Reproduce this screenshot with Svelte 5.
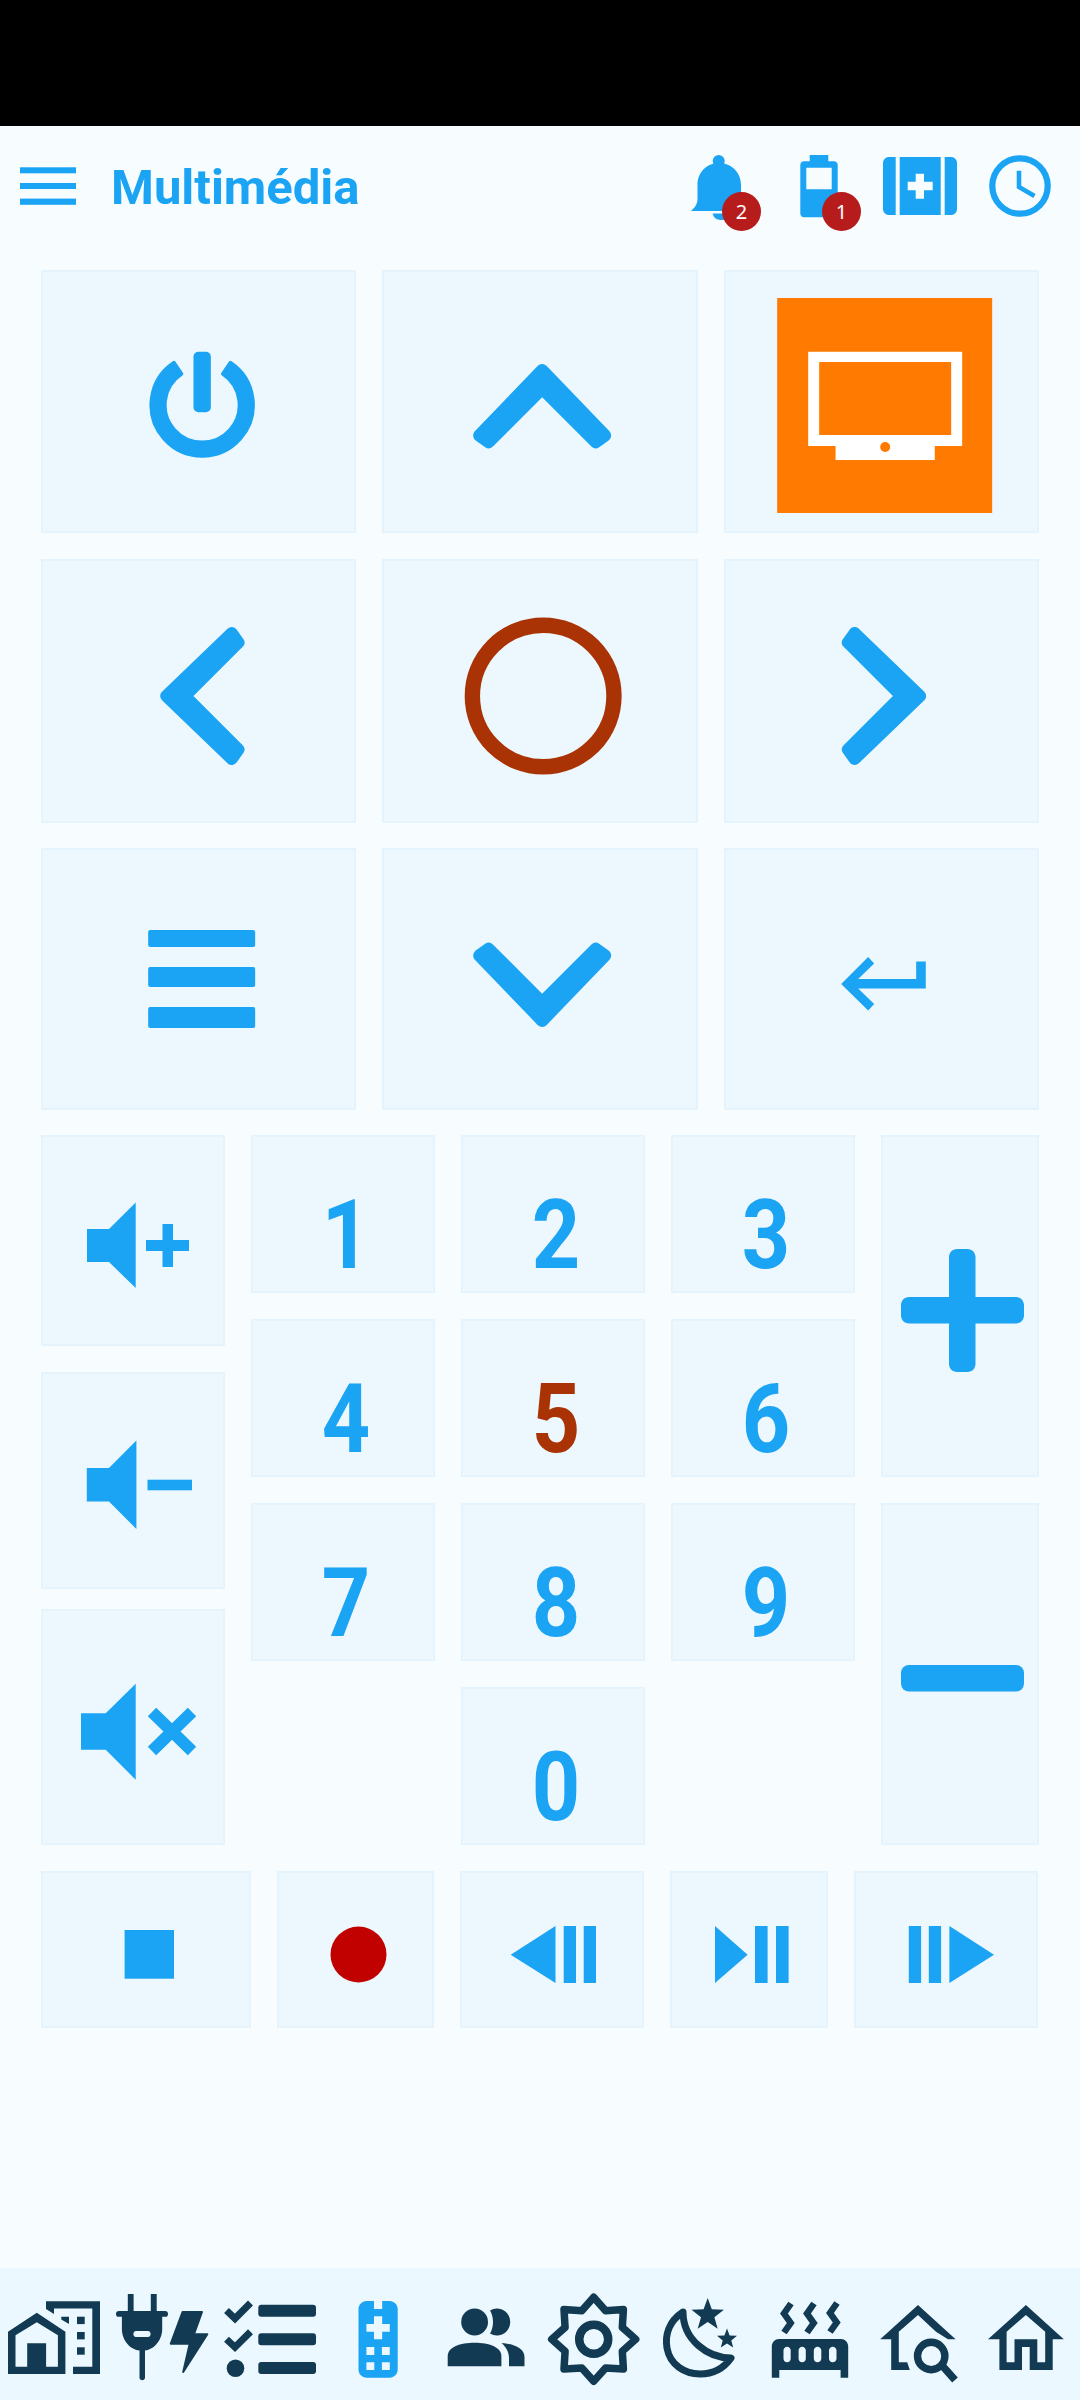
<script>
  const digits = ["1", "2", "3", "4", "5", "6", "7", "8", "9", "0"];

  // up-pointing chevron, apex on 0,0 - rotated for the other three directions
  const chevron = "M0 6L63 71.5L53.5 78.3L0 24.8L-53.5 78.3L-63 71.5Z";

  const starPoints = (cx, cy, outer, inner, tips) => {
    const pts = [];
    for (let i = 0; i < tips * 2; i++) {
      const r = i % 2 ? inner : outer;
      const a = (Math.PI * i) / tips - Math.PI / 2;
      pts.push((cx + r * Math.cos(a)).toFixed(1) + "," + (cy + r * Math.sin(a)).toFixed(1));
    }
    return pts.join(" ");
  };
</script>

<div class="screen">
  <div class="status"></div>

  <header>
    <svg class="burger" viewBox="20 165 56 42" width="56" height="42">
      <rect x="20" y="167.3" width="56" height="6" />
      <rect x="20" y="183" width="56" height="6" />
      <rect x="20" y="198.6" width="56" height="6.2" />
    </svg>
    <h1>Multimédia</h1>
    <div class="actions">
      <div class="action bell">
        <svg viewBox="690 155 60 66" width="60" height="66">
          <circle cx="718.7" cy="161" r="6" />
          <path d="M691 211Q697 206 697.5 200V185C697.5 171 708 163 719 163C730 163 741 171 741 185V200Q741 206 747 211Z" />
          <path d="M712.7 213.5H731C730 218 725 220 721.5 220C717 220 713.5 218 712.7 213.5Z" />
        </svg>
        <span class="badge">2</span>
      </div>
      <div class="action battery">
        <svg viewBox="800 155 40 66" width="40" height="66">
          <path fill-rule="evenodd" d="M809.7 155H828.3V161.3H834C836 161.3 837.7 163 837.7 165V213.5C837.7 215.5 836 217.3 834 217.3H804C802 217.3 800.3 215.5 800.3 213.5V165C800.3 163 802 161.3 804 161.3H809.7ZM806.3 167.7V189.3H831.7V167.7Z" />
        </svg>
        <span class="badge">1</span>
      </div>
      <div class="action">
        <svg viewBox="883 155 74 66" width="74" height="66">
          <path d="M895.7 157V215H889C885.7 215 883 212.3 883 209V163C883 159.7 885.7 157 889 157Z" />
          <path d="M944.7 157H951C954.3 157 957 159.7 957 163V209C957 212.3 954.3 215 951 215H944.7Z" />
          <path fill-rule="evenodd" d="M899.7 157H940.7V215H899.7ZM915.7 173.7V181.7H907.7V190.3H915.7V198.7H924V190.3H932.7V181.7H924V173.7Z" />
        </svg>
      </div>
      <div class="action">
        <svg viewBox="989 155 62 66" width="62" height="66">
          <circle class="line" cx="1020" cy="186" r="27.7" stroke-width="6.2" />
          <path class="line" d="M1019 170.7V187L1034.5 196" stroke-width="4.6" />
        </svg>
      </div>
    </div>
  </header>

  <main>
    <section class="dpad">
      <button class="key">
        <svg viewBox="41 270 315 263">
          <rect x="193.3" y="351.7" width="17.4" height="60.6" rx="5" />
          <path class="soft" stroke-width="4" d="M173.7 362.9A50.7 50.7 0 1 0 230.3 362.9L222.9 373.9A37.5 37.5 0 1 1 181.1 373.9Z" />
        </svg>
      </button>
      <button class="key">
        <svg viewBox="382 270 315 263">
          <path class="soft" stroke-width="12" d={chevron} transform="translate(542 364)" />
        </svg>
      </button>
      <button class="key">
        <svg viewBox="724 270 315 263">
          <rect class="orange" x="777" y="298" width="215" height="215" />
          <path class="white" fill-rule="evenodd" d="M808 351.7H962V446H934.6V460H835.4V446H808ZM819 362V435H951V362Z" />
          <circle class="orange" cx="885" cy="447" r="5" />
        </svg>
      </button>

      <button class="key">
        <svg viewBox="41 558 315 264">
          <path class="soft" stroke-width="12" d={chevron} transform="translate(160 695) rotate(-90)" />
        </svg>
      </button>
      <button class="key">
        <svg viewBox="382 558 315 264">
          <circle class="line brown" cx="543" cy="695" r="70.8" stroke-width="15.4" />
        </svg>
      </button>
      <button class="key">
        <svg viewBox="724 558 315 264">
          <path class="soft" stroke-width="12" d={chevron} transform="translate(926 695) rotate(90)" />
        </svg>
      </button>

      <button class="key">
        <svg viewBox="41 848 315 262">
          <rect x="148" y="930" width="107" height="17" rx="2" />
          <rect x="148" y="967" width="107" height="20" rx="2" />
          <rect x="148" y="1007" width="107" height="21" rx="2" />
        </svg>
      </button>
      <button class="key">
        <svg viewBox="382 848 315 262">
          <path class="soft" stroke-width="12" d={chevron} transform="translate(542 1027) rotate(180)" />
        </svg>
      </button>
      <button class="key">
        <svg viewBox="724 848 315 262">
          <path d="M841 984L868 957L874 963.5L858 979H916V961.5H925.6V988.6H858L874 1004L868 1010.5Z" />
        </svg>
      </button>
    </section>

    <section class="numpad">
      <div class="volume">
        <button class="key">
          <svg viewBox="41 1135 184 211">
            <path d="M87 1229H109L135.7 1202.4V1288L109 1262H87Z" />
            <path d="M162.5 1224H173V1240H189V1251H173V1267H162.5V1251H146V1240H162.5Z" />
          </svg>
        </button>
        <button class="key down">
          <svg viewBox="41 1372 184 217">
            <path d="M86.8 1468H109L136.4 1440.4V1529L109 1501.5H86.8Z" />
            <rect x="147.5" y="1479.7" width="44.5" height="10.6" />
          </svg>
        </button>
        <button class="key">
          <svg viewBox="41 1609 184 236">
            <path d="M81 1713.3H105.7L135.7 1683.7V1779.7L105.7 1749.7H81Z" />
            <path class="line" d="M152 1712L192 1751M192 1712L152 1751" stroke-width="12" />
          </svg>
        </button>
      </div>

      {#each digits as d}
        <button class="key digit" class:zero={d === "0"} class:hot={d === "5"}><span>{d}</span></button>
      {/each}

      <button class="key plus">
        <svg viewBox="881 1135 158 342">
          <path d="M949 1257C949 1252.6 952.6 1249 957 1249H967.5C971.9 1249 975.5 1252.6 975.5 1257V1297H1016C1020.4 1297 1024 1300.6 1024 1305V1315.6C1024 1320 1020.4 1323.6 1016 1323.6H975.5V1364C975.5 1368.4 971.9 1372 967.5 1372H957C952.6 1372 949 1368.4 949 1364V1323.6H909C904.6 1323.6 901 1320 901 1315.6V1305C901 1300.6 904.6 1297 909 1297H949Z" />
        </svg>
      </button>
      <button class="key minus">
        <svg viewBox="881 1503 158 342">
          <rect x="901" y="1665" width="123" height="26.5" rx="8" />
        </svg>
      </button>
    </section>

    <section class="transport">
      <button class="key">
        <svg viewBox="41 1871 210 157"><rect x="124.6" y="1930" width="49.4" height="48.7" /></svg>
      </button>
      <button class="key">
        <svg viewBox="277 1871 157 157"><circle class="rec" cx="358.5" cy="1954.5" r="28" /></svg>
      </button>
      <button class="key">
        <svg viewBox="461 1871 184 157">
          <path d="M511.7 1954.7L556.5 1926V1983Z" />
          <rect x="564.7" y="1926" width="12.3" height="57" />
          <rect x="584.7" y="1926" width="12.3" height="57" />
        </svg>
      </button>
      <button class="key">
        <svg viewBox="671 1871 158 157">
          <path d="M716 1926L748.6 1954.7L716 1983Z" />
          <rect x="756" y="1926" width="12.6" height="57" />
          <rect x="777" y="1926" width="12.6" height="57" />
        </svg>
      </button>
      <button class="key">
        <svg viewBox="855 1871 184 157">
          <rect x="909.8" y="1926" width="12.3" height="57" />
          <rect x="929.8" y="1926" width="12.3" height="57" />
          <path d="M950.4 1926L995 1954.7L950.4 1983Z" />
        </svg>
      </button>
    </section>
  </main>

  <nav>
    <svg viewBox="0 2268 108 132" width="108" height="132">
      <path fill-rule="evenodd" d="M8 2331.7L36.8 2312.7L65.4 2331.7V2374H8ZM15.5 2335.3V2366.7H27.2V2343.3H46.1V2366.7H57.9V2335.3L36.8 2322.3Z" />
      <path d="M46 2301.3H100V2374H73V2366.7H92.3V2308.5H54V2314L46 2309Z" />
      <path d="M61.3 2316.7H69V2324L61.3 2319.5Z" />
      <rect x="77" y="2316.7" width="7.7" height="7.4" />
      <rect x="77" y="2332" width="7.7" height="7.4" />
      <rect x="77" y="2347.3" width="7.7" height="7.4" />
    </svg>
    <svg viewBox="108 2268 104 132" width="104" height="132">
      <rect x="127.8" y="2294" width="5.8" height="18" />
      <rect x="150.8" y="2294" width="5.9" height="18" />
      <rect x="116" y="2311" width="52" height="5.8" rx="2.9" />
      <path fill-rule="evenodd" d="M121.9 2316H162.2V2329C162.2 2341 153 2350 145 2350.5V2377.5C145 2381 139.5 2381 139.5 2377.5V2350.5C131 2350 121.9 2341 121.9 2329ZM136 2331C132.5 2331 132.5 2337 136 2337H148C151.5 2337 151.5 2331 148 2331Z" />
      <path class="soft" stroke-width="2" d="M182.5 2312H202L193.9 2334.3H207.3L183.2 2372L189.7 2343.7H170.8Z" />
    </svg>
    <svg viewBox="212 2268 123 132" width="123" height="132">
      <path class="line" d="M226.5 2310.5L235 2318.5L250.5 2303" stroke-width="7" />
      <path class="line" d="M226.5 2339.2L235 2347.2L250.5 2331.7" stroke-width="7" />
      <circle cx="235.5" cy="2368.3" r="8.8" />
      <rect x="258.3" y="2304.7" width="57.7" height="12" rx="3" />
      <rect x="258.3" y="2333.3" width="57.7" height="12" rx="3" />
      <rect x="258.3" y="2362" width="57.7" height="12" rx="3" />
    </svg>
    <svg class="current" viewBox="335 2268 85 132" width="85" height="132">
      <path fill-rule="evenodd" d="M366.5 2301H374V2309H382.2V2301H389.7C394 2301 397.7 2304.7 397.7 2309V2369.7C397.7 2374 394 2377.7 389.7 2377.7H366.5C362.2 2377.7 358.5 2374 358.5 2369.7V2309C358.5 2304.7 362.2 2301 366.5 2301ZM374 2316.3V2324H366.4V2331.7H374V2339.3H382.2V2331.7H389.8V2324H382.2V2316.3ZM366.4 2347V2355H374.3V2347ZM381.9 2347V2355H389.8V2347ZM366.4 2362.3V2370H374.3V2362.3ZM381.9 2362.3V2370H389.8V2362.3Z" />
    </svg>
    <svg viewBox="420 2268 115 132" width="115" height="132">
      <circle cx="474.6" cy="2322" r="13.4" />
      <path d="M447.7 2366.3V2356C447.7 2347 460 2342.7 474.6 2342.7C489 2342.7 501.4 2347 501.4 2356V2366.3Z" />
      <path d="M490 2310.5A13.4 13.4 0 1 1 490 2333.5C494 2327 494 2317 490 2310.5Z" />
      <path d="M501.5 2343C515 2344 524.5 2349 524.5 2357V2366.3H509V2358C509 2352 506 2347 501.5 2343Z" />
    </svg>
    <svg viewBox="535 2268 115 132" width="115" height="132">
      <polygon class="line round" points={starPoints(593.7, 2339.3, 42, 31, 8)} stroke-width="7.5" />
      <circle class="line" cx="593.7" cy="2339.3" r="14.5" stroke-width="8.5" />
    </svg>
    <svg viewBox="650 2268 110 132" width="110" height="132">
      <path class="line round" d="M683 2312C668 2322 665 2336 667 2348C670 2365 685 2374 700 2374C714 2374 724 2368 731 2358C708 2358 683 2340 683 2312Z" stroke-width="7" />
      <polygon points={starPoints(707.7, 2315, 17, 7, 5)} />
      <polygon points={starPoints(727, 2339, 10.5, 4.5, 5)} />
    </svg>
    <svg viewBox="760 2268 110 132" width="110" height="132">
      <path fill-rule="evenodd" d="M779 2339H841C845 2339 848.2 2342.5 848.2 2346.5V2377.7H840.6V2370H779.3V2377.7H771.8V2346.5C771.8 2342.5 775 2339 779 2339ZM787.1 2346.7C785 2346.7 783.5 2348.5 783.5 2350.3V2358.7C783.5 2360.5 785 2362.3 787.1 2362.3C789.2 2362.3 790.7 2360.5 790.7 2358.7V2350.3C790.7 2348.5 789.2 2346.7 787.1 2346.7ZM802.2 2346.7C800.1 2346.7 798.6 2348.5 798.6 2350.3V2358.7C798.6 2360.5 800.1 2362.3 802.2 2362.3C804.3 2362.3 805.8 2360.5 805.8 2358.7V2350.3C805.8 2348.5 804.3 2346.7 802.2 2346.7ZM817.5 2346.7C815.4 2346.7 813.8 2348.5 813.8 2350.3V2358.7C813.8 2360.5 815.4 2362.3 817.5 2362.3C819.6 2362.3 821.3 2360.5 821.3 2358.7V2350.3C821.3 2348.5 819.6 2346.7 817.5 2346.7ZM832.7 2346.7C830.6 2346.7 829 2348.5 829 2350.3V2358.7C829 2360.5 830.6 2362.3 832.7 2362.3C834.8 2362.3 836.5 2360.5 836.5 2358.7V2350.3C836.5 2348.5 834.8 2346.7 832.7 2346.7Z" />
      <path class="line" d="M791 2303.5L784 2313.5L790.7 2323L784 2332.5" stroke-width="6.5" />
      <path class="line" d="M814 2303.5L807 2313.5L813.7 2323L807 2332.5" stroke-width="6.5" />
      <path class="line" d="M837 2303L830 2313L836.7 2322.5L830 2332" stroke-width="6.5" />
    </svg>
    <svg viewBox="870 2268 105 132" width="105" height="132">
      <path d="M880.2 2339.3L918 2305L955.6 2339.3H948L936 2331.7L918 2315L898.8 2331.7V2362.3H907.2L909.8 2370H891.2V2339.3Z" />
      <circle class="line" cx="931.2" cy="2356" r="13.7" stroke-width="7.4" />
      <path class="line" d="M943 2366.5L955 2380" stroke-width="7.5" />
    </svg>
    <svg viewBox="975 2268 105 132" width="105" height="132">
      <path fill-rule="evenodd" d="M988 2339.3L1025.9 2305L1063.8 2339.3H1052.7V2370H1029.7V2347H1022V2370H999.4V2339.3ZM1006.6 2331.7V2362.3H1014.5V2339.3H1037.3V2362.3H1045.2V2331.7L1025.9 2315Z" />
    </svg>
  </nav>
</div>

<style>
  :global(body) {
    background: #f7fcff;
  }

  .screen {
    display: flex;
    flex-direction: column;
    width: 1080px;
    height: 2400px;
    background: #f7fcff;
    font-family: Roboto, sans-serif;
  }

  .status {
    height: 126px;
    background: #000;
  }

  svg {
    display: block;
    fill: currentColor;
  }

  header {
    display: flex;
    align-items: flex-start;
    height: 144px;
    padding-left: 20px;
    color: #1ba3f4;
  }

  .burger {
    margin-top: 39px;
  }

  h1 {
    margin: 32px 0 0 35px;
    font-size: 49px;
    line-height: 60px;
    font-weight: 700;
  }

  .actions {
    display: grid;
    grid-template-columns: 110px 83px 106px 62px;
    margin-left: auto;
    margin-right: 29px;
    padding-top: 29px;
  }

  .action {
    position: relative;
  }

  .badge {
    position: absolute;
    top: 37px;
    left: 32px;
    width: 39px;
    height: 39px;
    border-radius: 50%;
    background: #b71c1c;
    color: #fff;
    font-family: "Noto Sans", sans-serif;
    font-size: 20px;
    line-height: 39px;
    text-align: center;
  }

  .battery .badge {
    left: 22px;
  }

  main {
    display: flex;
    flex-direction: column;
    gap: 25px;
    padding: 0 41px;
  }

  .key {
    display: block;
    margin: 0;
    padding: 0;
    border: 0;
    background: #ecf8fe;
    box-shadow: inset 0 0 0 2px #e5f3fc;
    color: #1ba3f4;
    font-family: inherit;
  }

  .key svg {
    width: 100%;
    height: 100%;
  }

  .dpad {
    display: grid;
    grid-template-columns: 1fr 1fr 1fr;
    grid-template-rows: 263px 264px 262px;
    column-gap: 26px;
    row-gap: 25.5px;
  }

  .numpad {
    display: grid;
    grid-template-columns: 184px 184px 184px 184px 158px;
    grid-auto-rows: 158px;
    gap: 26px;
  }

  .volume {
    display: flex;
    flex-direction: column;
    grid-column: 1;
    grid-row: 1 / 5;
  }

  .volume .key:nth-child(1) {
    height: 211px;
  }

  .volume .key:nth-child(2) {
    height: 217px;
    margin: 26px 0 20px;
  }

  .volume .key:nth-child(3) {
    height: 236px;
  }

  .digit {
    padding-top: 42px;
    font-family: Roboto, sans-serif;
    font-size: 96px;
    font-weight: 700;
    line-height: 1;
    overflow: hidden;
  }

  .digit span {
    display: block;
    transform: translateX(3px) scaleX(0.88);
  }

  .hot {
    color: #a93304;
  }

  .zero {
    grid-column: 3;
    grid-row: 4;
  }

  .plus {
    grid-column: 5;
    grid-row: 1 / 3;
  }

  .minus {
    grid-column: 5;
    grid-row: 3 / 5;
  }

  .transport {
    display: grid;
    grid-template-columns: 210px 157px 184px 158px 184px;
    grid-template-rows: 157px;
    column-gap: 26px;
    margin-top: 1px;
  }

  nav {
    display: flex;
    margin-top: auto;
    height: 132px;
    background: #ebf8ff;
    color: #123a52;
  }

  nav .current {
    color: #1ba3f4;
  }

  .line {
    fill: none;
    stroke: currentColor;
  }

  .round {
    stroke-linejoin: round;
  }

  .soft {
    stroke: currentColor;
    stroke-linejoin: round;
  }

  .orange {
    fill: #ff7a00;
  }

  .white {
    fill: #fff;
  }

  .brown {
    stroke: #a93304;
  }

  .rec {
    fill: #c10000;
  }
</style>
